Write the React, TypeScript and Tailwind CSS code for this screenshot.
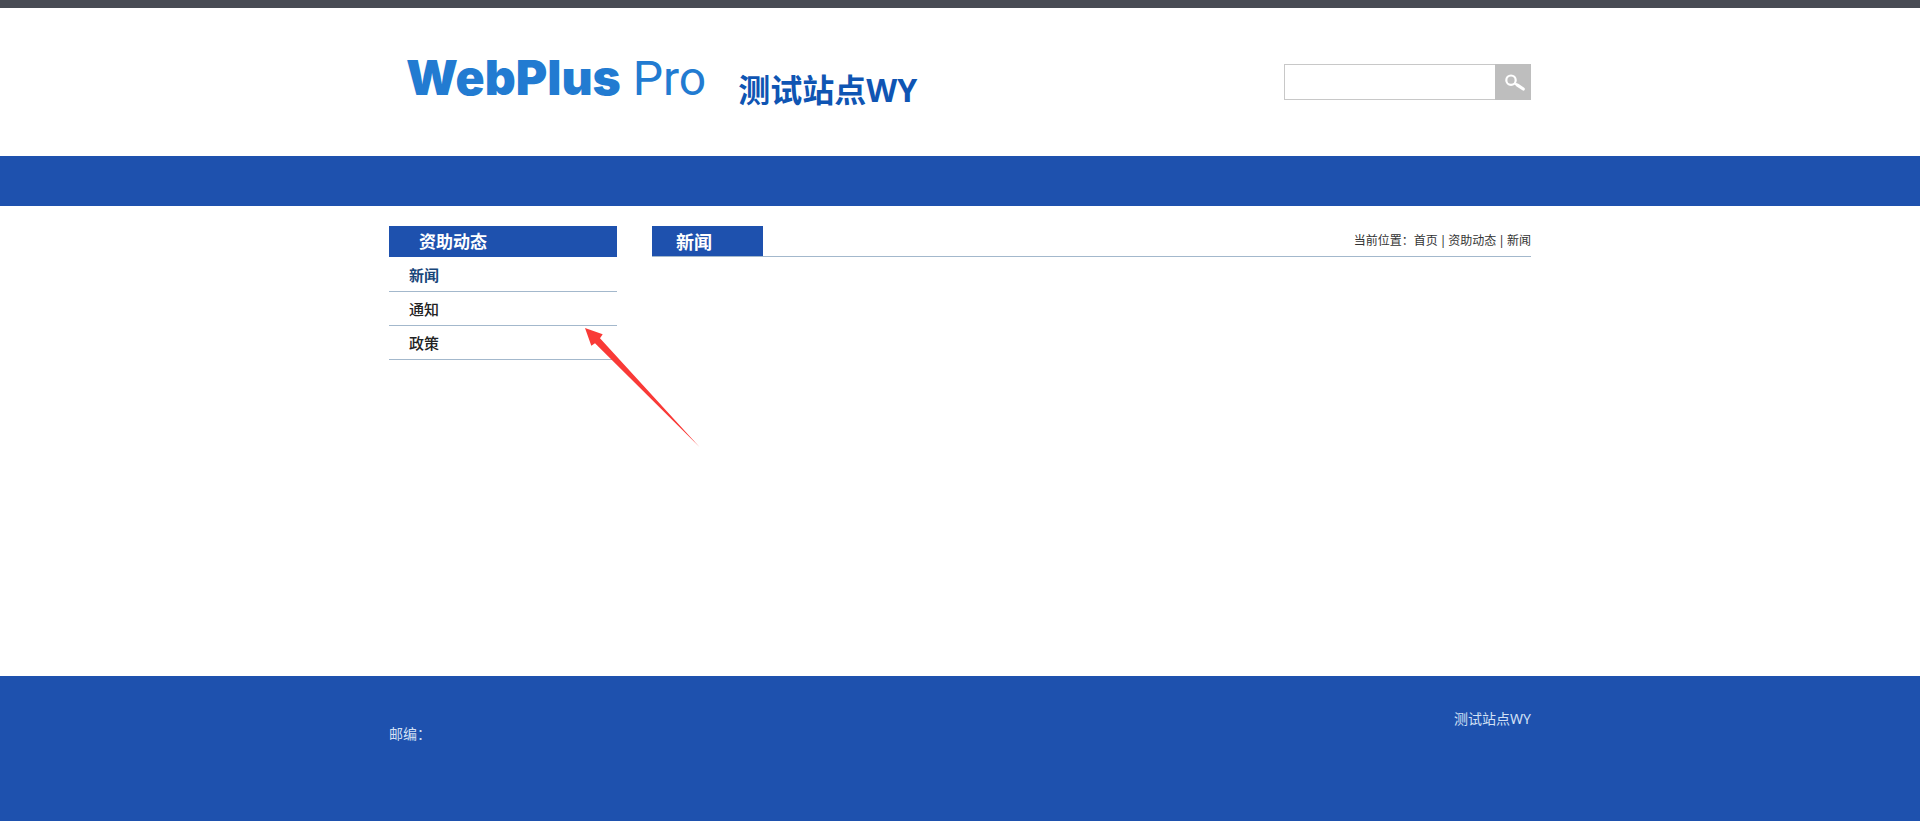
import React from "react";

const sections = [
  { label: "新闻", active: true },
  { label: "通知", active: false },
  { label: "政策", active: false },
];

function Header() {
  return (
    <header className="mx-auto flex h-[148px] w-full max-w-[1142px] items-start justify-between">
      <div className="flex items-start">
        <a href="#" className="ml-[17px] flex items-baseline gap-3 pt-[41px] text-[48px] leading-[58px] text-[#227bd1]">
          <span className="font-['Inter'] font-black">WebPlus</span>
          <span className="font-['Roboto'] font-normal">Pro</span>
        </a>
        <h1 className="ml-8 pt-[62px] text-[32px] leading-[40px] font-bold text-[#0f55b3]">测试站点WY</h1>
      </div>
      <form className="mt-14 flex h-9" role="search" onSubmit={(e) => e.preventDefault()}>
        <input
          type="text"
          aria-label="搜索"
          className="w-[211px] border border-r-0 border-[#c8c8c8] bg-white px-2 text-sm outline-none"
        />
        <button type="submit" aria-label="搜索" className="flex w-9 items-center justify-center bg-[#bebebe]">
          <svg className="ml-1 h-5 w-6" viewBox="0 0 24 20" fill="none" stroke="#fff">
            <circle cx="8" cy="8.2" r="4.7" strokeWidth="2.2" />
            <path d="M12 11.5l2.500 1.700" strokeWidth="2.4" />
            <path d="M14.500 13.200l5.800 3.800" strokeWidth="3.2" strokeLinecap="round" />
          </svg>
        </button>
      </form>
    </header>
  );
}

function Sidebar() {
  return (
    <nav className="relative w-[228px] shrink-0">
      <h2 className="h-[31px] bg-[#1e51ae] pl-[30px] text-[17px] leading-[32px] font-bold text-white">资助动态</h2>
      <ul className="pt-px">
        {sections.map((s) => (
          <li key={s.label} className="border-b border-[#a3b8cc]">
            <a
              href="#"
              className={
                s.active
                  ? "block pt-px pl-5 text-[15px] leading-[32px] font-semibold text-[#17467a]"
                  : "block pt-px pl-5 text-[15px] leading-[32px] font-medium text-[#222]"
              }
            >
              {s.label}
            </a>
          </li>
        ))}
      </ul>
      <svg
        className="pointer-events-none absolute top-[102px] left-[196px] h-[120px] w-[116px]"
        viewBox="0 0 116 120"
        fill="#f93a37"
        aria-hidden="true"
      >
        <path d="M0 0L17.700 6.300L15 10.300L114.500 119L10 15.300L6.300 17.700Z" />
      </svg>
    </nav>
  );
}

export default function App() {
  return (
    <div className="flex min-h-screen flex-col bg-white font-['Noto_Sans','Noto_Sans_CJK_SC',sans-serif]">
      <div className="h-2 bg-[#484b54]" />
      <Header />
      <div className="h-[50px] bg-[#1e51ae]" />
      <div className="mx-auto flex w-full max-w-[1142px] flex-1 items-start gap-[35px] pt-5">
        <Sidebar />
        <main className="min-w-0 flex-1">
          <div className="flex h-[31px] justify-between border-b border-[#a3b8cc]">
            <h2 className="w-[111px] bg-[#1e51ae] pl-6 text-[18px] leading-[32px] font-bold text-white">新闻</h2>
            <p className="flex text-xs leading-[30px] text-[#333]">
              <span>当前位置：</span>
              <a href="#">首页</a>
              <span className="px-0.5">|</span>
              <a href="#">资助动态</a>
              <span className="px-0.5">|</span>
              <a href="#">新闻</a>
            </p>
          </div>
        </main>
      </div>
      <footer className="h-[145px] bg-[#1e51ae] text-sm text-[#d2e0f5]">
        <div className="mx-auto flex w-full max-w-[1142px] items-start justify-between">
          <p className="pt-12 leading-5">邮编：</p>
          <p className="pt-[33px] leading-5">测试站点WY</p>
        </div>
      </footer>
    </div>
  );
}
